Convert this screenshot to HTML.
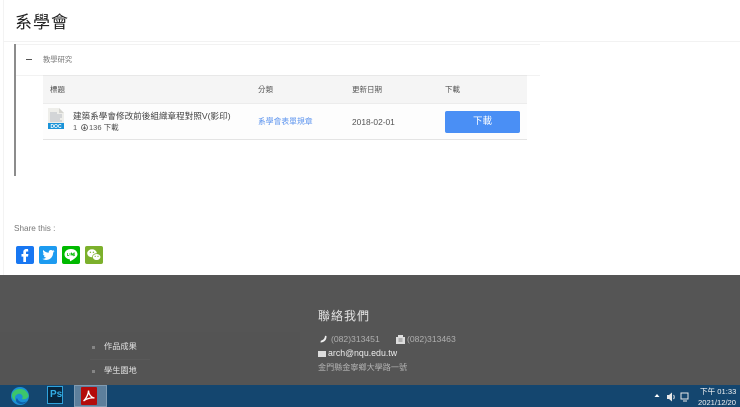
<!DOCTYPE html>
<html lang="zh-Hant">
<head>
<meta charset="utf-8">
<title>系學會</title>
<style>
html,body{margin:0;padding:0;background:#fff}
body{width:740px;height:407px;overflow:hidden;position:relative;font-family:"Liberation Sans","Noto Sans CJK TC",sans-serif;color:#555}
#w{position:absolute;left:0;top:0;width:740px;height:407px;filter:blur(.35px)}
.a{position:absolute;white-space:nowrap;line-height:1}
.r{position:absolute}
svg{position:absolute;display:block}
</style>
</head>
<body>
<div id="w">
<div class="r" style="left:3px;top:0;width:1px;height:275px;background:#f3f3f3"></div>
<div class="r" style="left:3px;top:41px;width:737px;height:1px;background:#f2f2f2"></div>
<div class="a" style="left:15px;top:14px;font-size:17px;letter-spacing:1px;color:#222">系學會</div>

<div class="r" style="left:14px;top:44px;width:2px;height:132px;background:#8c8c8c"></div>
<div class="r" style="left:16px;top:44px;width:524px;height:1px;background:#f2f2f2"></div>
<div class="r" style="left:16px;top:75px;width:524px;height:1px;background:#f2f2f2"></div>
<div class="r" style="left:26px;top:59px;width:6px;height:1px;background:#555"></div>
<div class="a" style="left:43px;top:56px;font-size:7.3px;color:#777">教學研究</div>

<div class="r" style="left:43px;top:75px;width:484px;height:28px;background:#f5f5f5;border-top:1px solid #e8e8e8;box-sizing:border-box"></div>
<div class="r" style="left:43px;top:103px;width:484px;height:37px;background:#fdfdfd;border-top:1px solid #ececec;border-bottom:1px solid #e4e4e4;box-sizing:border-box"></div>
<div class="a" style="left:50px;top:86px;font-size:7.5px;color:#555">標題</div>
<div class="a" style="left:258px;top:86px;font-size:7.5px;color:#555">分類</div>
<div class="a" style="left:352px;top:86px;font-size:7.5px;color:#555">更新日期</div>
<div class="a" style="left:445px;top:86px;font-size:7.5px;color:#555">下載</div>

<svg style="left:48px;top:108px" width="16" height="22" viewBox="0 0 16 22">
<path d="M0 0H11L16 5V15H0Z" fill="#eeeeea"/>
<path d="M11 0L16 5H11Z" fill="#d5d5d0"/>
<path d="M2 5H9M2 7H14M2 9H14M2 11H12M2 13H14" stroke="#b8bcc4" stroke-width="1"/>
<rect x="0" y="15" width="16" height="6" fill="#1a93d8"/>
<text x="8" y="20" font-size="5" font-weight="700" fill="#fff" text-anchor="middle" font-family="Liberation Sans">DOC</text>
</svg>
<div class="a" style="left:73px;top:112px;font-size:8.6px;color:#444">建築系學會修改前後組織章程對照V(影印)</div>
<div class="a" style="left:73px;top:124px;font-size:7.5px;color:#555">1</div>
<svg style="left:81px;top:124px" width="7" height="7" viewBox="0 0 7 7"><circle cx="3.500" cy="3.500" r="3" fill="none" stroke="#555" stroke-width=".8"/><path d="M3.500 1.500V5M2 3.600L3.500 5L5 3.600" fill="none" stroke="#555" stroke-width=".8"/></svg>
<div class="a" style="left:89px;top:124px;font-size:7.5px;color:#555">136 下載</div>
<div class="a" style="left:258px;top:118px;font-size:7.8px;color:#5b93ee">系學會表單規章</div>
<div class="a" style="left:352px;top:118px;font-size:8.4px;color:#555">2018-02-01</div>
<div class="r" style="left:445px;top:111px;width:75px;height:22px;background:#4a8ff5;border-radius:2px"></div>
<div class="a" style="left:445px;top:117px;width:75px;text-align:center;font-size:9.5px;color:#fff">下載</div>

<div class="a" style="left:14px;top:225px;font-size:8.2px;color:#777">Share this :</div>
<div class="r" style="left:16px;top:246px;width:18px;height:18px;background:#1877f2;border-radius:2px"></div>
<svg style="left:16px;top:246px" width="18" height="18" viewBox="0 0 18 18"><path d="M12 3H10.300C8.500 3 7.300 4.200 7.300 6V8H5.500V10.600H7.300V16H10V10.600H12L12.400 8H10V6.400C10 5.800 10.300 5.500 11 5.500H12.300Z" fill="#fff"/></svg>
<div class="r" style="left:39px;top:246px;width:18px;height:18px;background:#1d9bf0;border-radius:2px"></div>
<svg style="left:39px;top:246px" width="18" height="18" viewBox="0 0 18 18"><path d="M15.500 5C15 5.200 14.500 5.400 14 5.400C14.500 5.100 15 4.600 15.100 4C14.600 4.300 14 4.500 13.400 4.600C12.200 3.400 9.700 4.100 9.700 6.100C9.700 6.300 9.700 6.600 9.800 6.800C7.600 6.700 5.600 5.600 4.300 4C3.600 5.200 4 6.700 5.100 7.500C4.700 7.500 4.300 7.400 3.900 7.200C3.900 8.500 4.800 9.600 6 9.800C5.600 9.900 5.200 9.900 4.800 9.900C5.200 10.900 6.100 11.600 7.200 11.600C6.100 12.500 4.700 12.900 3.200 12.800C4.400 13.600 5.800 14 7.200 14C11.500 14 14.200 10.400 14.100 6.600C14.700 6.200 15.200 5.600 15.500 5Z" fill="#fff"/></svg>
<div class="r" style="left:62px;top:246px;width:18px;height:18px;background:#00b900;border-radius:2px"></div>
<svg style="left:62px;top:246px" width="18" height="18" viewBox="0 0 18 18"><path d="M9 3C5.200 3 2.500 5.300 2.500 8.300C2.500 11 4.700 13 7.600 13.400C8.200 13.500 8 14.100 7.900 14.800C7.900 15.200 8.200 15.300 8.600 15.100C10.600 14 15.500 11.400 15.500 8.300C15.500 5.300 12.800 3 9 3Z" fill="#fff"/><path d="M5.500 7V9.500H7M8 7V9.500M9.300 9.500V7L11 9.500V7M12.900 7H11.900V9.500H12.900M11.900 8.200H12.900" fill="none" stroke="#00b900" stroke-width=".7"/></svg>
<div class="r" style="left:85px;top:246px;width:18px;height:18px;background:#7cb02c;border-radius:2px"></div>
<svg style="left:85px;top:246px" width="18" height="18" viewBox="0 0 18 18"><ellipse cx="7" cy="7.300" rx="4.800" ry="4" fill="#fff"/><ellipse cx="11.600" cy="11" rx="4.200" ry="3.400" fill="#fff" stroke="#7cb02c" stroke-width=".7"/><circle cx="5.400" cy="6.300" r=".7" fill="#7cb02c"/><circle cx="8.400" cy="6.300" r=".7" fill="#7cb02c"/><circle cx="10.200" cy="10.400" r=".6" fill="#7cb02c"/><circle cx="13" cy="10.400" r=".6" fill="#7cb02c"/></svg>

<div class="r" style="left:0;top:275px;width:740px;height:110px;background:#555"></div>
<div class="r" style="left:0;top:332px;width:300px;height:53px;background:#545454"></div>
<div class="r" style="left:90px;top:359px;width:60px;height:1px;background:#595959"></div>
<div class="r" style="left:92px;top:346px;width:3px;height:3px;background:#858585"></div>
<div class="a" style="left:104px;top:343px;font-size:8.2px;color:#e0e0e0">作品成果</div>
<div class="r" style="left:92px;top:370px;width:3px;height:3px;background:#858585"></div>
<div class="a" style="left:104px;top:367px;font-size:8.2px;color:#e0e0e0">學生園地</div>

<div class="a" style="left:318px;top:310px;font-size:12px;letter-spacing:1px;color:#e4e4e4">聯絡我們</div>
<svg style="left:319px;top:335px" width="9" height="9" viewBox="0 0 9 9"><path d="M7.500 1L6 .8C5.800 3.500 4.500 5 1.800 5.800L1.500 7.500C5 7.500 7.800 5 7.500 1Z" fill="#eee"/></svg>
<div class="a" style="left:331px;top:335px;font-size:8.6px;color:#b0b0b0">(082)313451</div>
<svg style="left:396px;top:335px" width="9" height="9" viewBox="0 0 9 9"><path d="M0 2H2V0H7V2H9V9H0Z" fill="#ddd"/><path d="M2.500 4H6.500M2.500 6H6.500" stroke="#666" stroke-width=".8"/></svg>
<div class="a" style="left:407px;top:335px;font-size:8.6px;color:#b0b0b0">(082)313463</div>
<div class="r" style="left:318px;top:351px;width:8px;height:6px;background:#ddd"></div>
<div class="a" style="left:328px;top:349px;font-size:8.8px;color:#ececec">arch@nqu.edu.tw</div>
<div class="a" style="left:318px;top:364px;font-size:8.1px;color:#b4b4b4">金門縣金寧鄉大學路一號</div>

<div class="r" style="left:0;top:385px;width:740px;height:22px;background:#14466f"></div>
<svg style="left:10px;top:386px" width="20" height="20" viewBox="0 0 20 20"><circle cx="10" cy="10" r="9" fill="#1b8fd6"/><path d="M2 8C4 2 15 0 18.500 9C19 12 15 14 12 13C14 10 11 7 8 8C5 9 4 12 6 15C3 14 1.500 11 2 8Z" fill="#3cc66b"/><path d="M6 15C8 19 14 19 17 15C14 17 9 17 7 12C6 13 6 14 6 15Z" fill="#0d5fa8"/></svg>
<div class="r" style="left:47px;top:386px;width:16px;height:18px;background:#06263f;border:1px solid #2fa3dc;box-sizing:border-box"></div>
<div class="a" style="left:50px;top:390px;font-size:10px;font-weight:700;color:#35b0e8">Ps</div>
<div class="r" style="left:74px;top:385px;width:33px;height:22px;background:#5d7f9c;border:1px solid #7f9bb3;box-sizing:border-box"></div>
<div class="r" style="left:81px;top:387px;width:16px;height:18px;background:#b30b0b;border-radius:1px"></div>
<svg style="left:81px;top:387px" width="16" height="18" viewBox="0 0 16 18"><path d="M2.500 14C5 12 7.500 7 7.500 3.500C7.500 7 10 10.500 13.500 11C10 10.500 5.500 11.500 2.500 14Z" fill="none" stroke="#fff" stroke-width="1.300"/></svg>
<svg style="left:654px;top:393px" width="6" height="5" viewBox="0 0 6 5"><path d="M3 1L5.500 4H.5Z" fill="#fff"/></svg>
<svg style="left:667px;top:392px" width="9" height="10" viewBox="0 0 9 10"><path d="M0 3H2L5 .5V9.500L2 7H0Z" fill="#e8e8e8"/><path d="M6.500 3C7.500 4 7.500 6 6.500 7" stroke="#e8e8e8" fill="none"/></svg>
<svg style="left:680px;top:392px" width="10" height="10" viewBox="0 0 10 10"><path d="M1 1H8V7H1ZM3 9H7" fill="none" stroke="#e8e8e8"/></svg>
<div class="a" style="left:700px;top:388px;font-size:7.6px;color:#f2f2f2">下午 01:33</div>
<div class="a" style="left:698px;top:399px;font-size:7.6px;color:#f2f2f2">2021/12/20</div>
</div>
</body>
</html>
